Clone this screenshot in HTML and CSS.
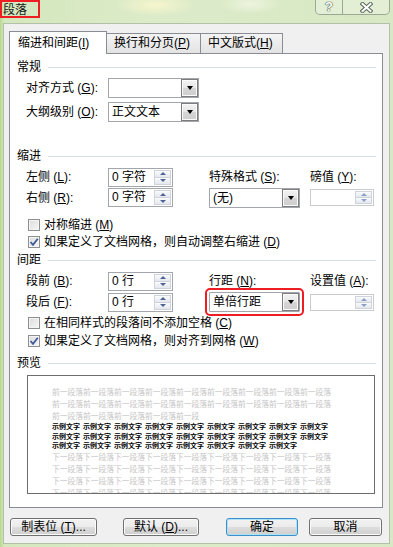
FILE: index.html
```html
<!DOCTYPE html>
<html lang="zh-CN">
  <head>
    <meta charset="UTF-8" />
    <meta name="viewport" content="width=device-width, initial-scale=1.0" />
    <title>段落</title>
    <link rel="stylesheet" href="styles.css">
  </head>
  <body>
    <div class="titlebar">
      <span class="title">段落</span>
      <div class="caption-buttons">
        <span class="cap-btn help">?</span>
        <span class="cap-btn close">
          <svg width="13" height="11" viewBox="0 0 13 11">
            <path d="M2.5 2 L10.5 9 M10.5 2 L2.5 9" stroke="#5a6a5a" stroke-width="4" stroke-linecap="square" fill="none" />
            <path d="M2.5 2 L10.5 9 M10.5 2 L2.5 9" stroke="#ffffff" stroke-width="2" stroke-linecap="square" fill="none" />
          </svg>
        </span>
      </div>
    </div>

    <div class="client">
      <div class="tabs">
        <div class="tab tab-indent active">缩进和间距(<u>I</u>)</div>
        <div class="tab tab-break">换行和分页(<u>P</u>)</div>
        <div class="tab tab-asian">中文版式(<u>H</u>)</div>
      </div>

      <div class="panel">
        <div class="group-title group-general">常规</div>
        <div class="form-row">
          <span class="label">对齐方式 (<u>G</u>):</span>
          <div class="combo"><span class="combo-value"></span><span class="combo-drop"></span></div>
        </div>
        <div class="form-row">
          <span class="label">大纲级别 (<u>O</u>):</span>
          <div class="combo"><span class="combo-value">正文文本</span><span class="combo-drop"></span></div>
        </div>

        <div class="group-title group-indent">缩进</div>
        <div class="field-grid grid-indent">
          <span class="label">左侧 (<u>L</u>):</span>
          <div class="spin"><span class="spin-value">0 字符</span><span class="spin-btns"><i class="up"></i><i class="down"></i></span></div>
          <span class="label">特殊格式 (<u>S</u>):</span>
          <span class="label">磅值 (<u>Y</u>):</span>
          <span class="label">右侧 (<u>R</u>):</span>
          <div class="spin"><span class="spin-value">0 字符</span><span class="spin-btns"><i class="up"></i><i class="down"></i></span></div>
          <div class="combo"><span class="combo-value">(无)</span><span class="combo-drop"></span></div>
          <div class="spin spin-disabled"><span class="spin-value"></span><span class="spin-btns"><i class="up"></i><i class="down"></i></span></div>
        </div>

        <div class="check-row check-first">
          <span class="check"></span>
          <span>对称缩进 (<u>M</u>)</span>
        </div>
        <div class="check-row">
          <span class="check checked">
            <svg width="10" height="10" viewBox="0 0 10 10"><path d="M1.5 5 L4 7.8 L8.8 1.8" stroke="#3f5a99" stroke-width="1.8" fill="none" /></svg>
          </span>
          <span>如果定义了文档网格，则自动调整右缩进 (<u>D</u>)</span>
        </div>

        <div class="group-title group-spacing">间距</div>
        <div class="field-grid grid-spacing">
          <span class="label">段前 (<u>B</u>):</span>
          <div class="spin"><span class="spin-value">0 行</span><span class="spin-btns"><i class="up"></i><i class="down"></i></span></div>
          <span class="label">行距 (<u>N</u>):</span>
          <span class="label">设置值 (<u>A</u>):</span>
          <span class="label">段后 (<u>F</u>):</span>
          <div class="spin"><span class="spin-value">0 行</span><span class="spin-btns"><i class="up"></i><i class="down"></i></span></div>
          <div class="combo highlighted"><span class="combo-value">单倍行距</span><span class="combo-drop"></span></div>
          <div class="spin spin-disabled"><span class="spin-value"></span><span class="spin-btns"><i class="up"></i><i class="down"></i></span></div>
        </div>

        <div class="check-row check-spacing">
          <span class="check"></span>
          <span>在相同样式的段落间不添加空格 (<u>C</u>)</span>
        </div>
        <div class="check-row check-spacing">
          <span class="check checked">
            <svg width="10" height="10" viewBox="0 0 10 10"><path d="M1.5 5 L4 7.8 L8.8 1.8" stroke="#3f5a99" stroke-width="1.8" fill="none" /></svg>
          </span>
          <span>如果定义了文档网格，则对齐到网格 (<u>W</u>)</span>
        </div>

        <div class="group-title group-preview">预览</div>
        <div class="preview">
          <div class="pv-gray">
            <div>前一段落前一段落前一段落前一段落前一段落前一段落前一段落前一段落前一段落</div>
            <div>前一段落前一段落前一段落前一段落前一段落前一段落前一段落前一段落前一段落</div>
            <div>前一段落前一段落前一段落前一段落前一段</div>
          </div>
          <div class="pv-sample">
            <div>示例文字 示例文字 示例文字 示例文字 示例文字 示例文字 示例文字 示例文字 示例文字</div>
            <div>示例文字 示例文字 示例文字 示例文字 示例文字 示例文字 示例文字 示例文字 示例文字</div>
            <div>示例文字 示例文字 示例文字 示例文字 示例文字 示例文字 示例文字 示例文字</div>
          </div>
          <div class="pv-gray pv-after">
            <div>下一段落下一段落下一段落下一段落下一段落下一段落下一段落下一段落下一段落</div>
            <div>下一段落下一段落下一段落下一段落下一段落下一段落下一段落下一段落下一段落</div>
            <div>下一段落下一段落下一段落下一段落下一段落下一段落下一段落下一段落下一段落</div>
            <div>下一段落下一段落下一段落下一段落下一段落下一段落下一段落下一段落下一段落</div>
          </div>
        </div>
      </div>

      <div class="buttons">
        <span class="btn btn-tabs">制表位 (<u>T</u>)...</span>
        <span class="btn btn-default">默认 (<u>D</u>)...</span>
        <span class="btn btn-ok">确定</span>
        <span class="btn btn-cancel">取消</span>
      </div>
    </div>
  </body>
</html>
```

FILE: styles.css
```css
* {
  box-sizing: border-box;
}

body {
  margin: 0;
  width: 393px;
  height: 547px;
  overflow: hidden;
  font-family: "Liberation Sans", "Noto Sans CJK SC", sans-serif;
  font-size: 12px;
  color: #000;
  background:
    radial-gradient(ellipse 40px 11px at 155px 5px, rgba(248, 246, 205, 0.95), rgba(248, 246, 205, 0)),
    radial-gradient(ellipse 30px 10px at 250px 4px, rgba(240, 246, 225, 0.9), rgba(240, 246, 225, 0)),
    linear-gradient(90deg, #b8d88e 0, #d4e7bd 4px, #dcebc9 40%, #d8e8c4 100%);
}

u {
  text-decoration: underline;
  text-underline-offset: 1px;
}

/* title bar */

.titlebar {
  display: flex;
  justify-content: space-between;
  align-items: flex-start;
  height: 23px;
}

.title {
  width: 40px;
  height: 18px;
  border: 2px solid #ee1d24;
  padding: 1px 0 0 1px;
  line-height: 14px;
  font-size: 12px;
  color: #1a1a1a;
}

.caption-buttons {
  display: flex;
  margin-right: 3px;
}

.cap-btn {
  height: 15px;
  display: flex;
  align-items: center;
  justify-content: center;
  border: 1px solid rgba(96, 110, 96, 0.55);
  border-top: none;
  background: rgba(255, 255, 255, 0.28);
}

.help {
  width: 28px;
  border-radius: 0 0 0 5px;
  font-weight: 700;
  font-size: 13px;
  line-height: 12px;
  color: #fff;
  text-shadow: 0 0 1px #445544, 0 0 1px #445544, 0 0 1px #445544;
}

.close {
  width: 47px;
  border-left: none;
  border-radius: 0 0 5px 0;
}

/* dialog body */

.client {
  margin: 0 3px;
  height: 521px;
  background: #f0f0f0;
  border: 1px solid #b3c0a8;
  padding: 7px 0 0 5px;
}

.tabs {
  display: flex;
  align-items: flex-end;
  height: 22px;
}

.tab {
  height: 20px;
  padding: 2px 0 0 7px;
  line-height: 14px;
  border: 1px solid #898c95;
  border-bottom: none;
  background: linear-gradient(#f4f4f4, #e3e3e3);
  margin-left: -1px;
}

.tab-indent {
  width: 98px;
  margin-left: 0;
}

.tab-break {
  width: 95px;
}

.tab-asian {
  width: 83px;
}

.tab.active {
  position: relative;
  height: 23px;
  padding: 4px 0 0 8px;
  margin-bottom: -1px;
  background: #fff;
}

.panel {
  width: 374px;
  height: 455px;
  border: 1px solid #898c95;
  background: #fff;
  padding: 0 6px 0 7px;
}

.group-title {
  display: flex;
  align-items: center;
  height: 14px;
  line-height: 14px;
}

.group-title::after {
  content: "";
  flex: 1;
  height: 1px;
  margin-left: 7px;
  background: #d5dfe5;
}

.group-general {
  margin-top: 6px;
}

.group-indent {
  margin-top: 27px;
}

.group-spacing {
  margin-top: 3px;
}

.group-preview {
  margin-top: 7px;
}

.label {
  line-height: 14px;
  white-space: nowrap;
}

.form-row {
  display: flex;
  align-items: center;
  height: 20px;
  margin: 4px 0 0 9px;
}

.form-row .label {
  width: 82px;
}

.field-grid {
  display: grid;
  grid-template-columns: 82px 101px 101px 64px;
  align-items: center;
  margin: 4px 0 0 9px;
}

.grid-indent {
  grid-template-rows: 20px 21px;
}

.grid-spacing {
  grid-template-rows: 20px 22px;
}

/* combo box */

.combo {
  display: flex;
  width: 91px;
  height: 20px;
  border: 1px solid #a3a7ad;
  background: #fff;
}

.combo-value {
  flex: 1;
  padding-left: 3px;
  line-height: 18px;
  font-size: 12px;
}

.combo-drop {
  width: 17px;
  display: flex;
  align-items: center;
  justify-content: center;
  border: 1px solid #7d7d7d;
  box-shadow: inset 0 0 0 1px #fbfbfb;
  background: linear-gradient(#f2f2f2, #e6e6e6 50%, #d5d5d5 51%, #cfcfcf);
}

.combo-drop::after {
  content: "";
  border-left: 3.5px solid transparent;
  border-right: 3.5px solid transparent;
  border-top: 4px solid #000;
}

.combo.highlighted {
  outline: 2px solid #ee1d24;
  outline-offset: 2px;
  border-radius: 1px;
}

/* spin box */

.spin {
  display: flex;
  width: 65px;
  height: 19px;
  border: 1px solid #a3a7ad;
  background: #fff;
}

.spin-value {
  flex: 1;
  padding-left: 3px;
  line-height: 17px;
}

.spin-btns {
  width: 17px;
  display: flex;
  flex-direction: column;
  margin: 1px 1px 1px 0;
}

.spin-btns i {
  flex: 1;
  display: flex;
  align-items: center;
  justify-content: center;
  border: 1px solid #cfd3da;
  background: linear-gradient(#fafbfc, #e4e7ee);
}

.spin-btns .down {
  border-top: none;
}

.spin-btns .up::after {
  content: "";
  border-left: 3px solid transparent;
  border-right: 3px solid transparent;
  border-bottom: 3px solid #4d6396;
}

.spin-btns .down::after {
  content: "";
  border-left: 3px solid transparent;
  border-right: 3px solid transparent;
  border-top: 3px solid #4d6396;
}

.spin-disabled {
  width: 64px;
  height: 17px;
  border-color: #c9cbcf;
}

.spin-disabled .spin-btns .up::after {
  border-bottom-color: #8ba0c9;
}

.spin-disabled .spin-btns .down::after {
  border-top-color: #8ba0c9;
}

/* check boxes */

.check-row {
  display: flex;
  align-items: center;
  gap: 4px;
  height: 16px;
  margin: 1px 0 0 11px;
  line-height: 14px;
  white-space: nowrap;
}

.check-first {
  margin-top: 9px;
}

.check-spacing {
  margin-top: 2px;
}

.check {
  width: 12px;
  height: 12px;
  display: flex;
  align-items: center;
  justify-content: center;
  border: 1px solid #8e8f8f;
  background: linear-gradient(135deg, #dcdcdc, #f6f6f6);
  box-shadow: inset 0 0 0 1px #f4f4f4;
}

/* preview */

.preview {
  width: 348px;
  height: 119px;
  margin: 5px 0 0 10px;
  border: 1px solid #6d6d6d;
  padding: 10px 0 0 24px;
  overflow: hidden;
  font-family: "Noto Sans CJK SC", sans-serif;
  white-space: nowrap;
}

.pv-gray {
  color: #c6c6c6;
  font-size: 7.75px;
  line-height: 12px;
}

.pv-sample {
  color: #000;
  font-size: 7px;
  font-weight: 700;
  line-height: 9.5px;
  word-spacing: 1.4px;
}

.pv-after {
  margin-top: 0.5px;
}

/* bottom buttons */

.buttons {
  display: flex;
  margin-top: 10px;
}

.btn {
  height: 18px;
  line-height: 16px;
  text-align: center;
  border: 1px solid #707070;
  border-radius: 3px;
  background: linear-gradient(#f2f2f2, #ebebeb 50%, #dddddd 51%, #cfcfcf);
  box-shadow: inset 0 0 0 1px #fcfcfc;
  white-space: nowrap;
}

.btn-tabs {
  width: 87px;
  margin-left: 1px;
}

.btn-default {
  width: 76px;
  margin-left: 26px;
}

.btn-ok {
  width: 72px;
  margin-left: 27px;
  border-color: #3c8fc9;
  box-shadow: inset 0 0 0 1px #a9e4f7;
}

.btn-cancel {
  width: 73px;
  margin-left: 11px;
}
```
